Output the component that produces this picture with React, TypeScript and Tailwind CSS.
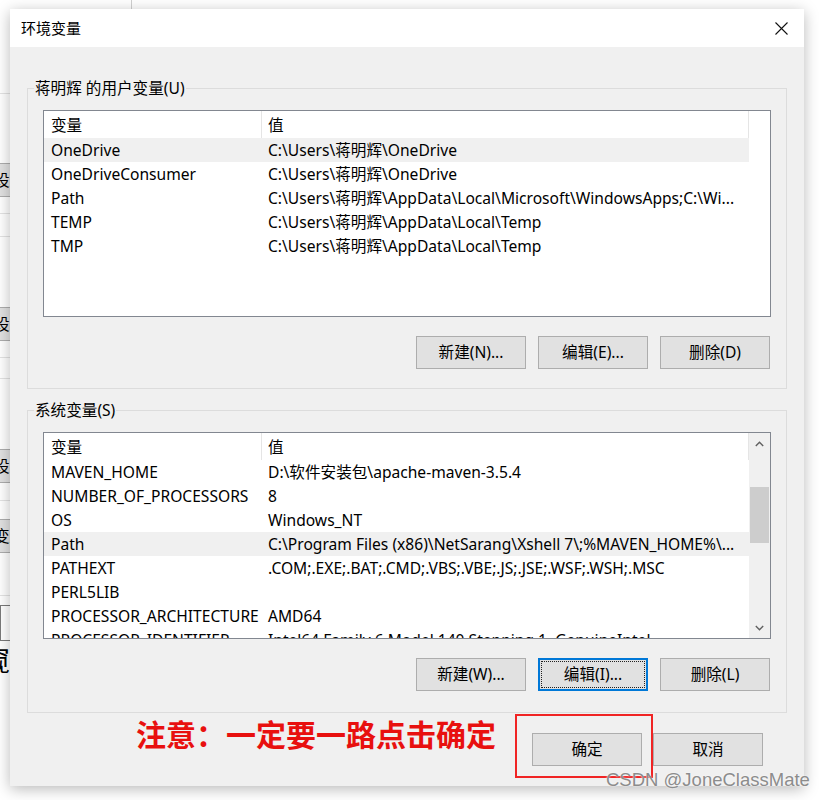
// Environment variables dialog (Windows 10 look)

const userRows = [
  ["OneDrive", "C:\\Users\\蒋明辉\\OneDrive"],
  ["OneDriveConsumer", "C:\\Users\\蒋明辉\\OneDrive"],
  ["Path", "C:\\Users\\蒋明辉\\AppData\\Local\\Microsoft\\WindowsApps;C:\\Wi..."],
  ["TEMP", "C:\\Users\\蒋明辉\\AppData\\Local\\Temp"],
  ["TMP", "C:\\Users\\蒋明辉\\AppData\\Local\\Temp"],
];

const sysRows = [
  ["MAVEN_HOME", "D:\\软件安装包\\apache-maven-3.5.4"],
  ["NUMBER_OF_PROCESSORS", "8"],
  ["OS", "Windows_NT"],
  ["Path", "C:\\Program Files (x86)\\NetSarang\\Xshell 7\\;%MAVEN_HOME%\\..."],
  ["PATHEXT", ".COM;.EXE;.BAT;.CMD;.VBS;.VBE;.JS;.JSE;.WSF;.WSH;.MSC"],
  ["PERL5LIB", ""],
  ["PROCESSOR_ARCHITECTURE", "AMD64"],
  ["PROCESSOR_IDENTIFIER", "Intel64 Family 6 Model 140 Stepping 1, GenuineIntel"],
];

const Chevron = ({ up }: { up?: boolean }) => (
  <svg width="9" height="6" viewBox="0 0 9 6" fill="none">
    <path
      d={up ? "M0.8 5 L4.5 1.3 L8.2 5" : "M0.8 1 L4.5 4.7 L8.2 1"}
      stroke="#606060"
      strokeWidth="1.4"
    />
  </svg>
);

const Scrollbar = () => (
  <div className="w-[21px] h-full bg-[#f0f0f0] flex flex-col">
    <div className="h-[21px] flex items-center justify-center">
      <Chevron up />
    </div>
    <div className="mt-[33px] ml-[1px] w-[19px] h-[56px] bg-[#cdcdcd]" />
    <div className="flex-1" />
    <div className="h-[21px] flex items-center justify-center">
      <Chevron />
    </div>
  </div>
);

function VarList({
  rows,
  selected,
  scroll,
}: {
  rows: string[][];
  selected: number;
  scroll?: boolean;
}) {
  return (
    <div className="h-[207px] border border-[#828790] bg-white flex overflow-hidden">
      <div className="w-[705px] flex flex-col overflow-hidden">
        <div className="h-[27px] shrink-0 flex leading-[28px]">
          <div className="w-[218px] border-r border-[#e5e5e5] pl-[7px]">变量</div>
          <div className="w-[487px] border-r border-[#e5e5e5] pl-[6px]">值</div>
        </div>
        {rows.map((r, i) => (
          <div
            key={i}
            className={
              "h-[24px] shrink-0 flex leading-[24px] whitespace-nowrap " +
              (i === selected ? "bg-[#f0f0f0]" : "")
            }
          >
            <div className="w-[218px] pl-[7px] overflow-hidden">{r[0]}</div>
            <div className="w-[486px] pl-[6px] overflow-hidden">{r[1]}</div>
          </div>
        ))}
      </div>
      {scroll ? <Scrollbar /> : null}
    </div>
  );
}

const WinButton = ({ label, focused }: { label: string; focused?: boolean }) => (
  <div
    className={
      "w-[110px] h-[33px] flex items-center justify-center bg-[#e1e1e1] " +
      (focused ? "border-2 border-[#0078d7] p-[1px]" : "border border-[#adadad]")
    }
  >
    {focused ? (
      <div className="w-full h-full border border-dotted border-[#222] flex items-center justify-center">
        {label}
      </div>
    ) : (
      label
    )}
  </div>
);

function Group({
  title,
  rows,
  selected,
  scroll,
  buttons,
  focusIdx,
  pb,
}: {
  title: string;
  rows: string[][];
  selected: number;
  scroll?: boolean;
  buttons: string[];
  focusIdx?: number;
  pb: string;
}) {
  return (
    <fieldset className={"border border-[#dcdcdc] px-[15px] pt-[12px] " + pb}>
      <legend className="ml-[-9px] px-[1px] leading-[20px]">{title}</legend>
      <VarList rows={rows} selected={selected} scroll={scroll} />
      <div className="mt-[19px] flex justify-end gap-[12px] pr-[1px]">
        {buttons.map((b, i) => (
          <WinButton key={b} label={b} focused={i === focusIdx} />
        ))}
      </div>
    </fieldset>
  );
}

const BgButton = ({ text }: { text: string }) => (
  <div className="h-[34px] w-[60px] bg-[#e1e1e1] border-y border-[#adadad] overflow-hidden whitespace-nowrap leading-[32px]">
    <span className="ml-[-6px]">{text}</span>
  </div>
);

export default function App() {
  return (
    <div className="relative w-[819px] h-[800px] overflow-hidden bg-white text-[15.6px] text-black font-['Noto_Sans','Noto_Sans_CJK_SC',sans-serif]">
      {/* desktop window peeking out behind the dialog */}
      <div className="w-[140px] flex flex-col">
        <div className="h-[9px] w-[132px] border-r border-[#d0d0d0]" />
        <div className="mt-[84px] border-t border-[#e3e3e3]" />
        <div className="mt-[69px]">
          <BgButton text="设置" />
        </div>
        <div className="mt-[16px] border-t border-[#e3e3e3]" />
        <div className="mt-[22px] border-t border-[#e3e3e3]" />
        <div className="mt-[70px]">
          <BgButton text="设置" />
        </div>
        <div className="mt-[16px] border-t border-[#e3e3e3]" />
        <div className="mt-[20px] border-t border-[#e3e3e3]" />
        <div className="mt-[70px]">
          <BgButton text="设置" />
        </div>
        <div className="mt-[17px] border-t border-[#e3e3e3]" />
        <div className="mt-[18px]">
          <BgButton text="变量" />
        </div>
        <div className="mt-[42px] border-t border-[#e3e3e3]" />
        <div className="mt-[9px] h-[36px] w-[60px] border border-[#7a7a7a] bg-white" />
        <div className="mt-[2px] ml-[-18px] text-[28px] leading-[34px]">窥见</div>
        <div className="mt-[88px] ml-[48px] text-[#333] text-[15px] leading-[18px]">2021/5/11</div>
      </div>

      {/* dialog window */}
      <div className="absolute left-[10px] top-[9px] w-[794px] h-[777px] bg-[#f0f0f0] flex flex-col shadow-[0_3px_14px_rgba(0,0,0,0.28)]">
        <div className="h-[38px] shrink-0 bg-white flex items-center justify-between pl-[11px] pr-[16px]">
          <span className="text-[15px]">环境变量</span>
          <svg width="13" height="13" viewBox="0 0 13 13">
            <path d="M0.5 0.5 L12.5 12.5 M12.5 0.5 L0.5 12.5" stroke="#111" strokeWidth="1.1" />
          </svg>
        </div>
        <div className="flex-1 px-[17px] pt-[31px] flex flex-col">
          <Group
            title="蒋明辉 的用户变量(U)"
            rows={userRows}
            selected={0}
            buttons={["新建(N)...", "编辑(E)...", "删除(D)"]}
            pb="pb-[19px]"
          />
          <div className="mt-[11px]">
            <Group
              title="系统变量(S)"
              rows={sysRows}
              selected={3}
              scroll
              buttons={["新建(W)...", "编辑(I)...", "删除(L)"]}
              focusIdx={1}
              pb="pb-[21px]"
            />
          </div>
          <div className="flex items-start">
            <div className="ml-[109px] mt-[7px] text-[30px] leading-[30px] font-bold text-[#e8100f] whitespace-nowrap">
              注意：一定要一路点击确定
            </div>
            <div className="ml-auto mr-[24px] mt-[20px] flex gap-[11px]">
              <WinButton label="确定" />
              <WinButton label="取消" />
            </div>
          </div>
        </div>
        {/* red annotation around OK */}
        <div className="absolute left-[505px] top-[705px] w-[138px] h-[64px] border-2 border-[#f02424]" />
      </div>

      <div className="absolute left-[606px] top-[768px] text-[18.5px] leading-[24px] text-[#8c8c8c] font-['Liberation_Sans',sans-serif] [text-shadow:0_0_2px_#fff]">
        CSDN @JoneClassMate
      </div>
    </div>
  );
}
